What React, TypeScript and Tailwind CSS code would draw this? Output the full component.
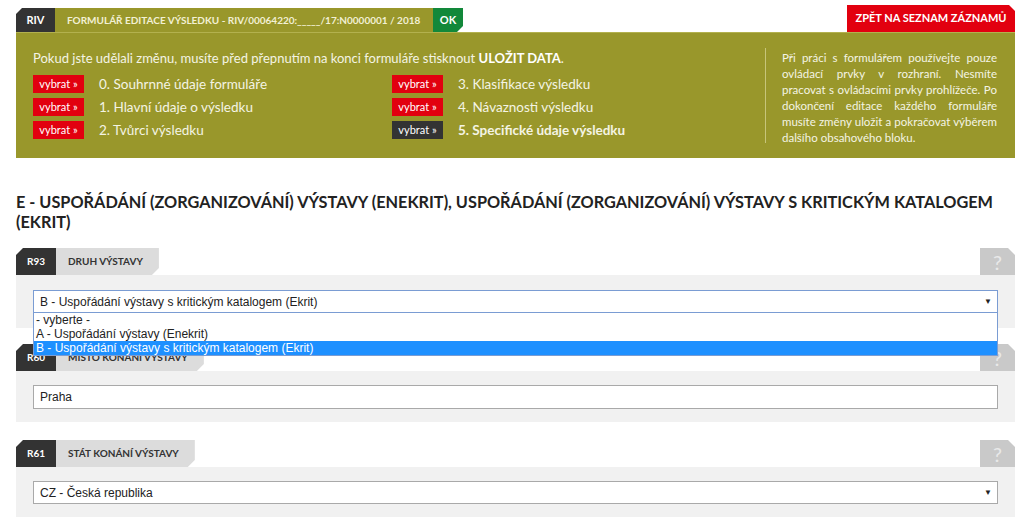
import React from "react";

const gothic = { fontFamily: "'Lato', 'DejaVu Sans', sans-serif" };

function VybratButton({ dark }: { dark?: boolean }) {
  return (
    <span
      className={
        "inline-flex h-[18px] w-[51px] items-center justify-center text-[11px] text-white " +
        (dark ? "bg-[#333333]" : "bg-[#e2000f]")
      }
    >
      vybrat »
    </span>
  );
}

function MenuItem({ label, dark }: { label: string; dark?: boolean }) {
  return (
    <div className="flex h-[23px] items-center gap-[15px]">
      <VybratButton dark={dark} />
      <span className={"text-[13.5px] text-[#f4f4e4] " + (dark ? "font-bold" : "")}>{label}</span>
    </div>
  );
}

function SectionTab({ code, label }: { code: string; label: string }) {
  return (
    <div className="flex h-[27px] items-stretch justify-between">
      <div className="flex">
        <div className="flex w-[40px] items-center justify-center bg-[#333333] text-[10px] font-bold text-white [clip-path:polygon(7px_0,100%_0,100%_100%,0_100%,0_7px)]">
          {code}
        </div>
        <div className="flex items-center bg-[#dcdcdc] pl-[12px] pr-[16px] text-[10px] font-bold uppercase text-[#333333] [clip-path:polygon(0_0,100%_0,100%_calc(100%-7px),calc(100%-7px)_100%,0_100%)]">
          {label}
        </div>
      </div>
      <div className="flex w-[35px] items-center justify-center bg-[#c9c9c9] text-[20px] text-[#e9e9e9] [clip-path:polygon(0_0,calc(100%-7px)_0,100%_7px,100%_100%,0_100%)]">
        ?
      </div>
    </div>
  );
}

function SelectBox({ value, active }: { value: string; active?: boolean }) {
  return (
    <div
      className={
        "flex h-[23px] items-center justify-between bg-white pl-[6px] pr-[5px] text-[12px] text-[#222] " +
        (active ? "border border-[#7a9cd3]" : "border border-[#a9a9a9]")
      }
      style={{ fontFamily: "'Liberation Sans', Arial, sans-serif" }}
    >
      <span>{value}</span>
      <span className="text-[8px]">▼</span>
    </div>
  );
}

function InputBox({ value }: { value: string }) {
  return (
    <div
      className="flex h-[24px] items-center border border-[#a9a9a9] bg-white pl-[6px] text-[12px] text-[#222]"
      style={{ fontFamily: "'Liberation Sans', Arial, sans-serif" }}
    >
      {value}
    </div>
  );
}

export default function App() {
  return (
    <div className="min-h-[523px] w-full bg-white pl-[16px] pr-[9px] text-[#222]" style={gothic}>
      {/* top bar */}
      <div className="flex items-end justify-between pt-[5px]">
        <div className="flex h-[24px]">
          <div className="flex w-[39px] items-center justify-center bg-[#333333] text-[11px] font-bold text-white [clip-path:polygon(6px_0,100%_0,100%_100%,0_100%,0_6px)]">
            RIV
          </div>
          <div className="flex w-[378px] items-center whitespace-nowrap bg-[#99972b] pl-[12px] text-[10px] font-bold text-[#f2f0d4]">
            FORMULÁŘ EDITACE VÝSLEDKU - RIV/00064220:_____/17:N0000001 / 2018
          </div>
          <div className="flex w-[30px] items-center justify-center bg-[#12883a] text-[11px] font-bold text-white [clip-path:polygon(0_0,100%_0,100%_calc(100%-6px),calc(100%-6px)_100%,0_100%)]">
            OK
          </div>
        </div>
        <div className="flex h-[27px] w-[168px] items-center justify-center bg-[#e2000f] text-[11px] font-bold text-white [clip-path:polygon(0_0,calc(100%-6px)_0,100%_6px,100%_100%,0_100%)]">
          ZPĚT NA SEZNAM ZÁZNAMŮ
        </div>
      </div>

      {/* info panel */}
      <div className="flex h-[126px] border-t border-[#b3b14e] bg-[#99972b] pl-[17px] pr-[18px]">
        <div className="w-[732px] pt-[16px]">
          <p className="text-[13px] text-[#f4f4e4]">
            Pokud jste udělali změnu, musíte před přepnutím na konci formuláře stisknout{" "}
            <b className="text-white">ULOŽIT DATA</b>.
          </p>
          <div className="mt-[4px] flex">
            <div className="w-[359px]">
              <MenuItem label="0. Souhrnné údaje formuláře" />
              <MenuItem label="1. Hlavní údaje o výsledku" />
              <MenuItem label="2. Tvůrci výsledku" />
            </div>
            <div>
              <MenuItem label="3. Klasifikace výsledku" />
              <MenuItem label="4. Návaznosti výsledku" />
              <MenuItem label="5. Specifické údaje výsledku" dark />
            </div>
          </div>
        </div>
        <div className="my-[15px] flex-1 border-l border-[#c7c57a] pl-[16px] pt-[2px]">
          <p className="text-justify text-[11.5px] leading-[16px] text-[#f4f4e4]">
            Při práci s formulářem používejte pouze ovládací prvky v rozhraní. Nesmíte pracovat s
            ovládacími prvky prohlížeče. Po dokončení editace každého formuláře musíte změny uložit
            a pokračovat výběrem dalšího obsahového bloku.
          </p>
        </div>
      </div>

      {/* heading */}
      <h1 className="mt-[34px] pr-[20px] text-[16.3px] font-bold uppercase leading-[20px] text-[#222]">
        E - Uspořádání (zorganizování) výstavy (Enekrit), Uspořádání (zorganizování) výstavy s
        kritickým katalogem (Ekrit)
      </h1>

      {/* R93 */}
      <div className="mt-[16px]">
        <SectionTab code="R93" label="Druh výstavy" />
        <div className="relative bg-[#f1f1f1] px-[17px] pb-[15px] pt-[15px]">
          <SelectBox value="B - Uspořádání výstavy s kritickým katalogem (Ekrit)" active />
          <div
            className="absolute left-[17px] right-[17px] top-[38px] z-10 border border-t-0 border-[#7a9cd3] bg-white text-[12px] leading-[14px] text-[#222]"
            style={{ fontFamily: "'Liberation Sans', Arial, sans-serif" }}
          >
            <div className="px-[2px]">- vyberte -</div>
            <div className="px-[2px]">A - Uspořádání výstavy (Enekrit)</div>
            <div className="bg-[#1e90ff] px-[2px] text-white">
              B - Uspořádání výstavy s kritickým katalogem (Ekrit)
            </div>
          </div>
        </div>
      </div>

      {/* R60 */}
      <div className="mt-[16px]">
        <SectionTab code="R60" label="Místo konání výstavy" />
        <div className="bg-[#f1f1f1] px-[17px] pb-[13px] pt-[14px]">
          <InputBox value="Praha" />
        </div>
      </div>

      {/* R61 */}
      <div className="mt-[18px]">
        <SectionTab code="R61" label="Stát konání výstavy" />
        <div className="bg-[#f1f1f1] px-[17px] pb-[13px] pt-[14px]">
          <SelectBox value="CZ - Česká republika" />
        </div>
      </div>
    </div>
  );
}
